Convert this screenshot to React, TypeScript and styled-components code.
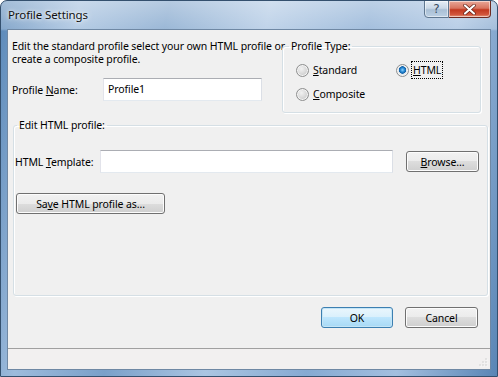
import React from 'react'
import styled, { createGlobalStyle } from 'styled-components'

const GlobalStyle = createGlobalStyle`
  html, body { margin: 0; padding: 0; }
  body {
    font-family: "Noto Sans", "DejaVu Sans", sans-serif;
    font-size: 10.5px;
    letter-spacing: -0.1px;
    color: #000;
  }
`

const Window = styled.div`
  width: 498px;
  height: 377px;
  box-sizing: border-box;
  display: flex;
  flex-direction: column;
  border: 1px solid #34506e;
  border-radius: 7px 7px 0 0;
  overflow: hidden;
  background:
    linear-gradient(to bottom, rgba(255,255,255,0.45) 0, rgba(255,255,255,0.25) 28px, rgba(255,255,255,0) 30px),
    linear-gradient(100deg, #5a88b8 0%, #9dbbdc 14%, #7aa0c9 30%, #abc5e2 48%, #86aad2 66%, #a3bfdf 82%, #5985b5 100%);
`

const TitleBar = styled.div`
  height: 28px;
  display: flex;
  align-items: flex-start;
  padding-left: 7px;
`

const Title = styled.span`
  line-height: 27px;
  font-size: 11.5px;
  color: #111;
  text-shadow: 0 0 6px rgba(255,255,255,0.95), 0 0 3px rgba(255,255,255,0.8);
`

const Caption = styled.div`
  margin-left: auto;
  margin-right: 6px;
  margin-top: -1px;
  display: flex;
`

const CaptionButton = styled.div<{ $close?: boolean }>`
  width: ${p => (p.$close ? 42 : 25)}px;
  height: 18px;
  box-sizing: border-box;
  display: flex;
  align-items: center;
  justify-content: center;
  border: 1px solid ${p => (p.$close ? '#6d2b22' : '#5f7790')};
  border-left-width: ${p => (p.$close ? 0 : 1)}px;
  border-radius: ${p => (p.$close ? '0 0 4px 0' : '0 0 0 4px')};
  box-shadow: inset 0 0 0 1px rgba(255,255,255,0.5);
  background: ${p =>
    p.$close
      ? 'linear-gradient(to bottom, #e9a899 0%, #d8745f 45%, #c2381f 55%, #d2563c 85%, #e79a7e 100%)'
      : 'linear-gradient(to bottom, #e6eef6 0%, #cad8e7 45%, #a9bfd5 55%, #bcd0e4 100%)'};
`

const HelpGlyph = styled.span`
  font-family: "DejaVu Sans", sans-serif;
  font-size: 12px;
  color: #3a4c5e;
  line-height: 1;
`

const Client = styled.div`
  flex: 1;
  margin: 0 6px 6px;
  border: 1px solid #6f88a4;
  background: #f0f0f0;
  display: flex;
  flex-direction: column;
`

const Main = styled.div`
  flex: 1;
  display: flex;
  flex-direction: column;
`

const TopRow = styled.div`
  display: flex;
  padding: 10px 9px 0 4px;
`

const LeftColumn = styled.div`
  width: 270px;
  flex: none;
  display: flex;
  flex-direction: column;
`

const Intro = styled.div`
  line-height: 13px;
  white-space: nowrap;
`

const FieldRow = styled.div<{ $top?: number }>`
  display: flex;
  align-items: center;
  margin-top: ${p => p.$top ?? 0}px;
`

const Label = styled.label<{ $width: number }>`
  width: ${p => p.$width}px;
  flex: none;
`

const TextBox = styled.div<{ $width: number }>`
  width: ${p => p.$width}px;
  height: 23px;
  box-sizing: border-box;
  background: #fff;
  border: 1px solid #e3e9ef;
  border-top-color: #abadb3;
  border-left-color: #e2e3ea;
  border-right-color: #dbdfe6;
  padding: 3px 0 0 4px;
  line-height: 14px;
`

const GroupBox = styled.fieldset<{ $width: number; $height: number }>`
  width: ${p => p.$width}px;
  height: ${p => p.$height}px;
  box-sizing: border-box;
  margin: 0;
  padding: 0;
  border: 1px solid #d5dfe5;
  border-radius: 3px;
  box-shadow: inset 1px 1px 0 #fff, 1px 1px 0 #fff;
  min-width: 0;
  flex: none;
`

const Legend = styled.legend<{ $offset: number }>`
  margin-left: ${p => p.$offset}px;
  padding: 0 2px;
  line-height: 13px;
`

const RadioGrid = styled.div`
  display: grid;
  grid-template-columns: 100px auto;
  grid-auto-rows: 24px;
  padding: 5px 0 0 13px;
  align-items: center;
`

const RadioItem = styled.div`
  display: flex;
  align-items: center;
  gap: 3px;
`

const RadioCircle = styled.span<{ $checked?: boolean }>`
  width: 13px;
  height: 13px;
  box-sizing: border-box;
  border-radius: 50%;
  border: 1px solid #8e8f8f;
  background: ${p =>
    p.$checked
      ? 'radial-gradient(circle at 50% 45%, #8fd3ff 0, #2a8ad4 2px, #0d5ea6 3.5px, #e0e6eb 4px, #eef1f3 100%)'
      : 'radial-gradient(circle at 40% 35%, #f2f2f2 0, #d6d6d6 55%, #bdbdbd 100%)'};
  box-shadow: inset 0 0 0 1px #f4f4f4;
  flex: none;
`

const RadioText = styled.span<{ $focused?: boolean }>`
  padding: 1px 1px;
  line-height: 14px;
  outline: ${p => (p.$focused ? '1px dotted #000' : 'none')};
`

const EditGroup = styled(GroupBox)`
  margin: 6px 2px 0 5px;
  padding: 0 0 0 1px;
`

const TemplateRow = styled(FieldRow)`
  margin-top: 18px;
`

const Button = styled.button<{ $width: number; $default?: boolean }>`
  width: ${p => p.$width}px;
  height: 21px;
  box-sizing: border-box;
  padding: 0;
  font: inherit;
  letter-spacing: inherit;
  color: #000;
  border-radius: 3px;
  border: 1px solid ${p => (p.$default ? '#3c7fb1' : '#707070')};
  box-shadow: inset 0 0 0 1px ${p => (p.$default ? '#c4e5f6' : '#fcfcfc')};
  background: ${p =>
    p.$default
      ? 'linear-gradient(to bottom, #eaf6fd 0%, #d9f0fc 50%, #bee6fd 50%, #a7d9f5 100%)'
      : 'linear-gradient(to bottom, #f2f2f2 0%, #ebebeb 50%, #dddddd 50%, #cfcfcf 100%)'};
  flex: none;
`

const BrowseButton = styled(Button)`
  margin-left: 13px;
`

const SaveButton = styled(Button)`
  margin: 20px 0 0 1px;
`

const ButtonRow = styled.div`
  display: flex;
  justify-content: flex-end;
  gap: 12px;
  padding: 11px 12px 0 0;
`

const StatusBar = styled.div`
  height: 18px;
  border-top: 1px solid #a0a0a0;
  background: #f2f0f0;
  display: flex;
  justify-content: flex-end;
  align-items: flex-end;
  padding: 0 2px 2px 0;
  box-sizing: content-box;
`

function Radio({ label, mnemonic, checked, focused }: { label: string; mnemonic: string; checked?: boolean; focused?: boolean }) {
  const rest = label.slice(mnemonic.length)
  return (
    <RadioItem>
      <RadioCircle $checked={checked} />
      <RadioText $focused={focused}>
        <u>{mnemonic}</u>
        {rest}
      </RadioText>
    </RadioItem>
  )
}

export default function App() {
  return (
    <>
      <GlobalStyle />
      <Window>
        <TitleBar>
          <Title>Profile Settings</Title>
          <Caption>
            <CaptionButton>
              <HelpGlyph>?</HelpGlyph>
            </CaptionButton>
            <CaptionButton $close>
              <svg width="13" height="11" viewBox="0 0 13 11">
                <path d="M2 1.5 L11 9.5 M11 1.5 L2 9.5" stroke="#5a1a10" strokeWidth="3.4" strokeLinecap="round" />
                <path d="M2 1.5 L11 9.5 M11 1.5 L2 9.5" stroke="#fff" strokeWidth="2.2" strokeLinecap="round" />
              </svg>
            </CaptionButton>
          </Caption>
        </TitleBar>
        <Client>
          <Main>
            <TopRow>
              <LeftColumn>
                <Intro>
                  Edit the standard profile select your own HTML profile or
                  <br />
                  create a composite profile.
                </Intro>
                <FieldRow $top={12}>
                  <Label $width={91}>
                    Profile <u>N</u>ame:
                  </Label>
                  <TextBox $width={159}>Profile1</TextBox>
                </FieldRow>
              </LeftColumn>
              <GroupBox $width={199} $height={73}>
                <Legend $offset={6}>Profile Type:</Legend>
                <RadioGrid>
                  <Radio label="Standard" mnemonic="S" />
                  <Radio label="HTML" mnemonic="H" checked focused />
                  <Radio label="Composite" mnemonic="C" />
                </RadioGrid>
              </GroupBox>
            </TopRow>
            <EditGroup $width={475} $height={177}>
              <Legend $offset={2}>Edit HTML profile:</Legend>
              <TemplateRow>
                <Label $width={85}>
                  HTML <u>T</u>emplate:
                </Label>
                <TextBox $width={293} />
                <BrowseButton $width={73}>
                  <u>B</u>rowse...
                </BrowseButton>
              </TemplateRow>
              <SaveButton $width={149}>
                Sa<u>v</u>e HTML profile as...
              </SaveButton>
            </EditGroup>
            <ButtonRow>
              <Button $width={72} $default>
                OK
              </Button>
              <Button $width={73}>Cancel</Button>
            </ButtonRow>
          </Main>
          <StatusBar>
            <svg width="10" height="10" viewBox="0 0 10 10">
              {[
                [8, 2],
                [8, 5],
                [5, 5],
                [8, 8],
                [5, 8],
                [2, 8],
              ].map(([x, y], i) => (
                <g key={i}>
                  <rect x={x + 0.5} y={y + 0.5} width="1" height="1" fill="#fff" />
                  <rect x={x - 0.5} y={y - 0.5} width="1" height="1" fill="#b4b4b4" />
                </g>
              ))}
            </svg>
          </StatusBar>
        </Client>
      </Window>
    </>
  )
}
